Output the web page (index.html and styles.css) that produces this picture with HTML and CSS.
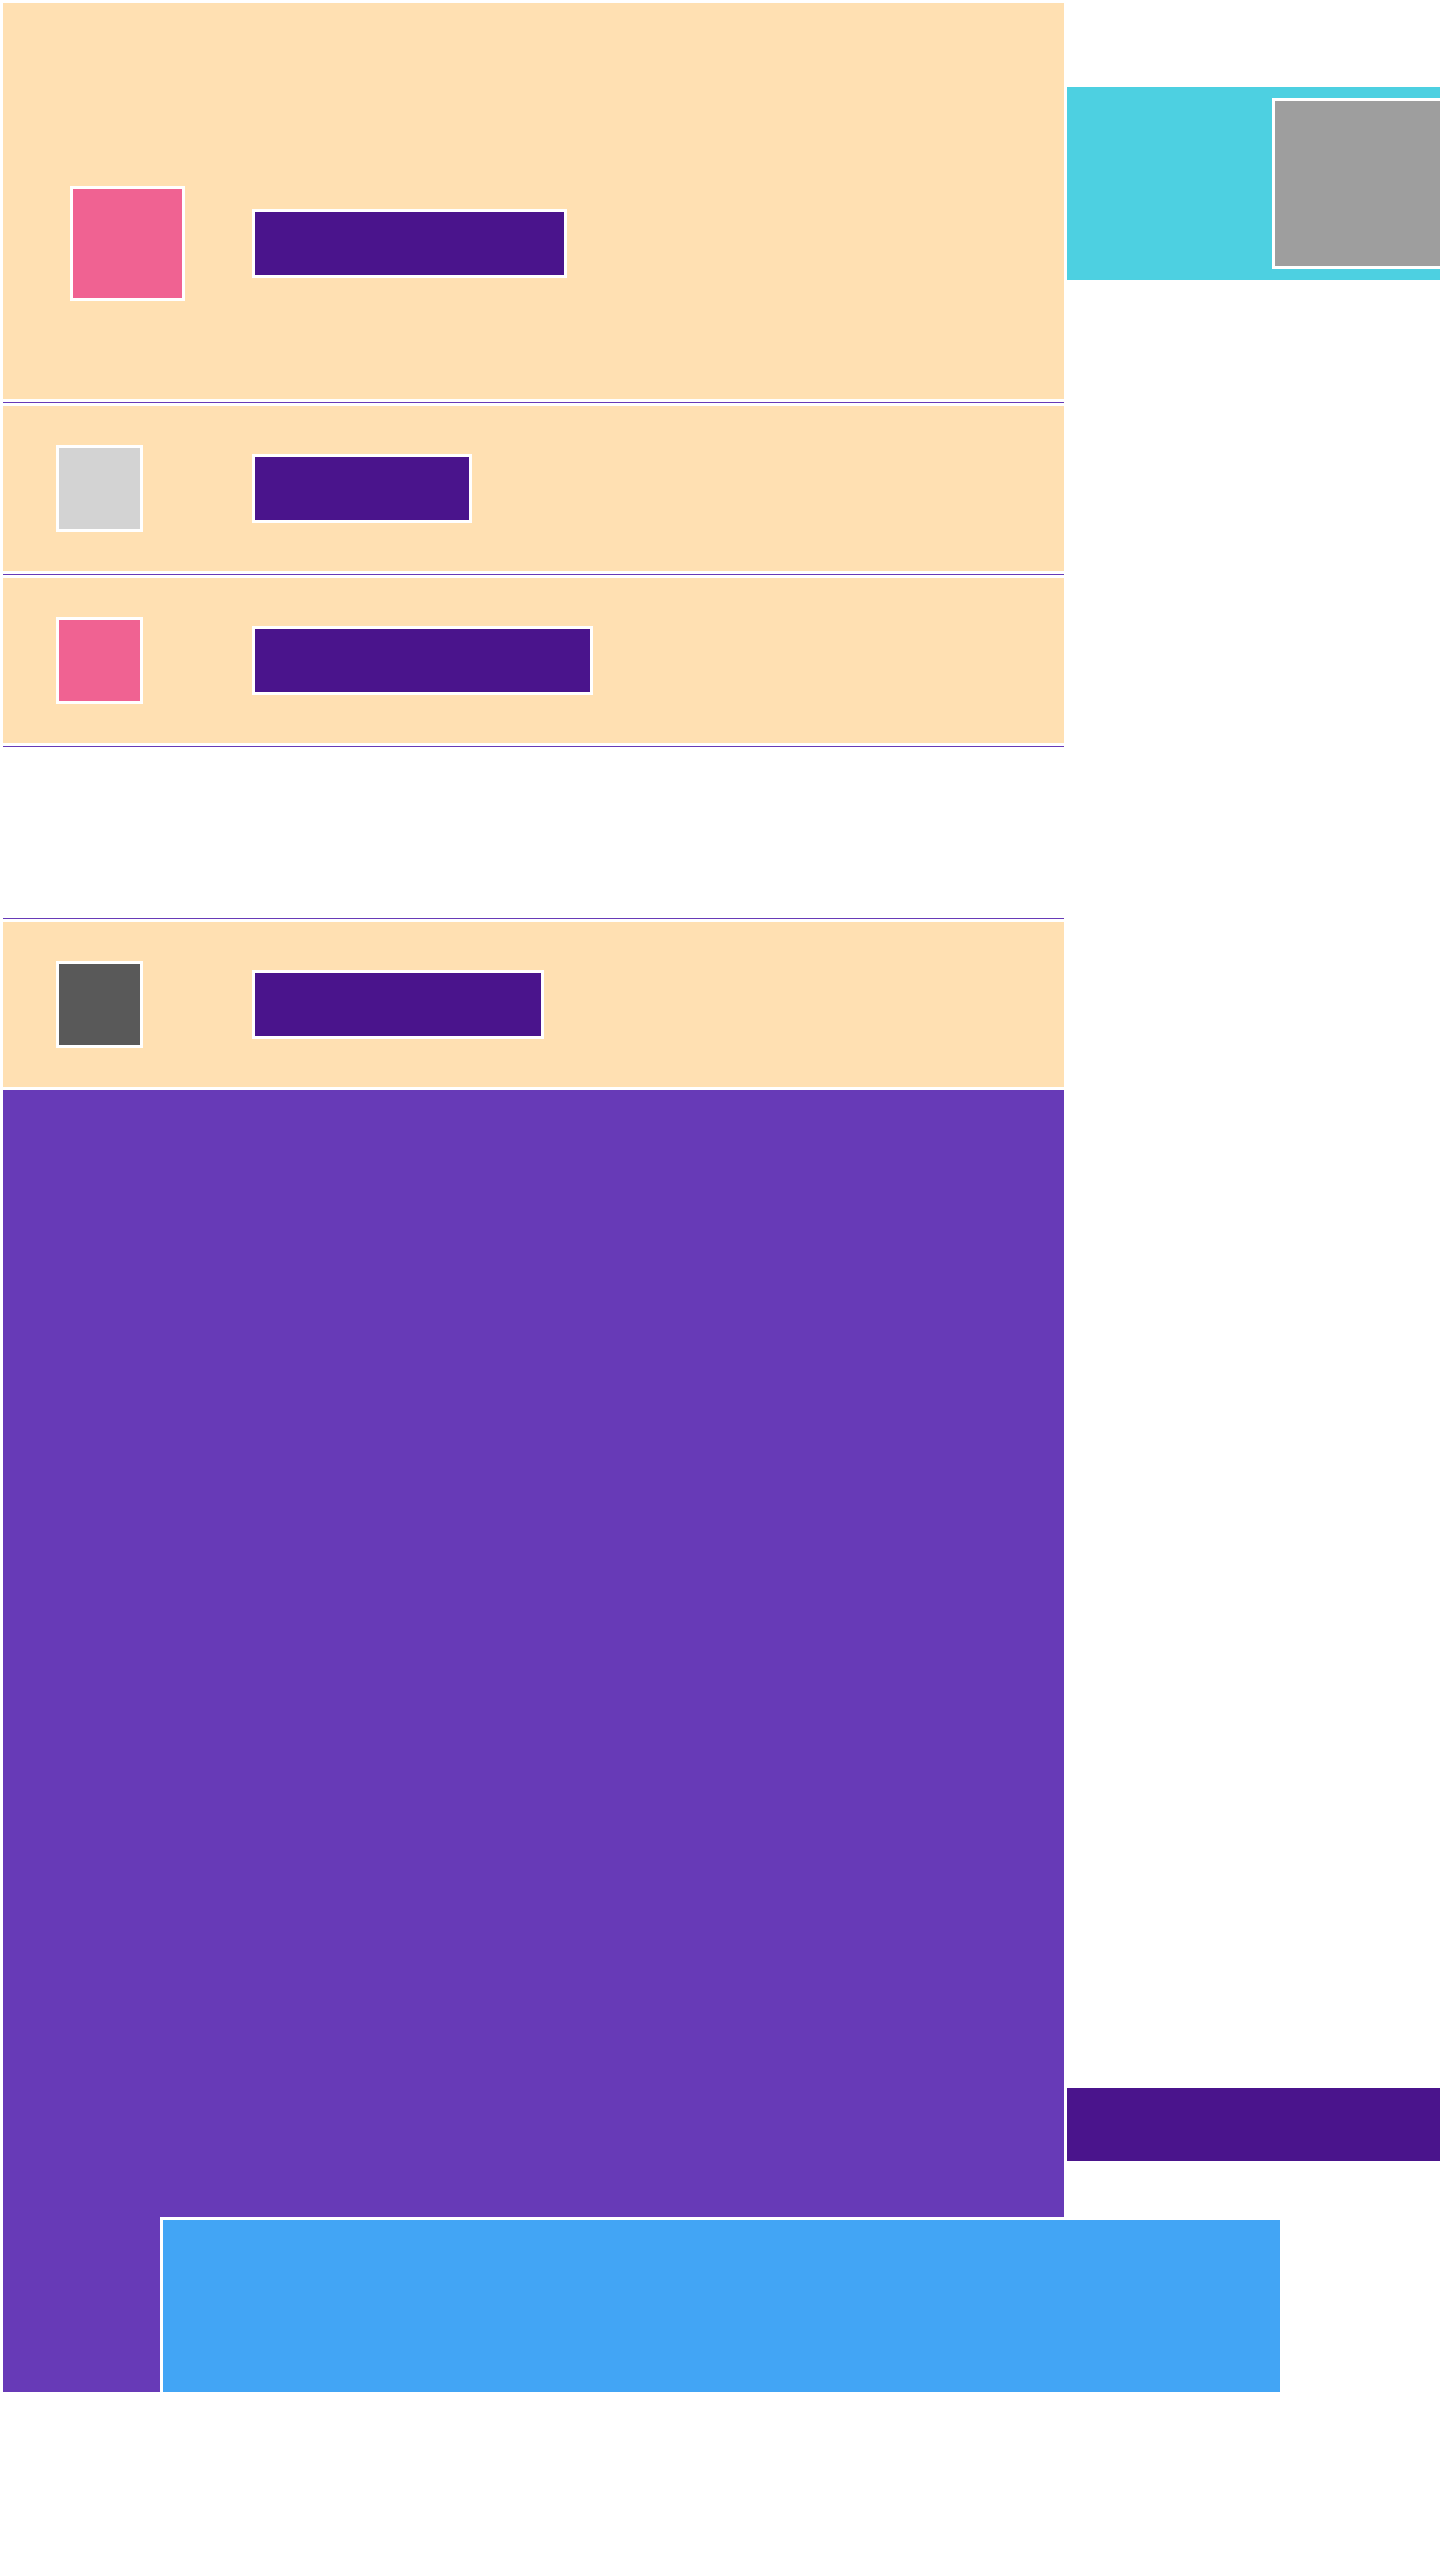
FILE: index.html
```html
<!DOCTYPE html>
<html>
<head>
    <title>Daftar</title>
    <link rel="stylesheet" href="styles.css">
</head>
<body>
    <div class="page">
        <div class="main">
            <div class="item item-top">
                <div class="thumb thumb-lg pink"></div>
                <div class="bar bar-top"></div>
            </div>
            <div class="line"></div>
            <div class="item">
                <div class="thumb light"></div>
                <div class="bar bar-a"></div>
            </div>
            <div class="line"></div>
            <div class="item">
                <div class="thumb pink"></div>
                <div class="bar bar-b"></div>
            </div>
            <div class="line"></div>
            <div class="item item-empty"></div>
            <div class="line"></div>
            <div class="item">
                <div class="thumb dark"></div>
                <div class="bar bar-c"></div>
            </div>
            <div class="panel"></div>
        </div>

        <div class="side">
            <div class="banner">
                <div class="avatar"></div>
            </div>
            <div class="side-bar"></div>
        </div>

        <!-- kartu biru menimpa panel ungu -->
        <div class="card"></div>
    </div>
</body>
</html>
```

FILE: styles.css
```css
body {
    margin: 0;
    font-family: "Liberation Sans", Arial, sans-serif;
    background-color: #fff;
    overflow-x: hidden;
}

.page {
    position: relative;
    display: flex;
    width: 1440px;
    height: 2560px;
}

.main {
    width: 1067px;
    flex-shrink: 0;
}

.item {
    display: flex;
    align-items: center;
    height: 165px;
    padding-left: 53px;
    background-color: #FFE0B2;
    border: 3px solid #fff;
}

.item-top {
    box-sizing: border-box;
    height: 402px;
    padding-left: 67px;
    padding-top: 85px;
}

.item-empty {
    background-color: #fff;
}

.line {
    height: 1px;
    margin: 0 3px;
    background-color: #673AB7;
}

.thumb {
    width: 81px;
    height: 81px;
    border: 3px solid #fff;
    margin-right: 109px;
    flex-shrink: 0;
}

.thumb-lg {
    width: 109px;
    height: 109px;
    margin-right: 67px;
}

.pink {
    background-color: #F06292;
}

.light {
    background-color: #D3D3D3;
}

.dark {
    background-color: #595959;
}

.bar {
    height: 63px;
    background-color: #4A148C;
    border: 3px solid #fff;
}

.bar-top {
    width: 309px;
}

.bar-a {
    width: 214px;
}

.bar-b {
    width: 335px;
}

.bar-c {
    width: 286px;
}

.panel {
    height: 1302px;
    margin: 0 3px;
    background-color: #673AB7;
}

.side {
    width: 373px;
    flex-shrink: 0;
}

.banner {
    display: flex;
    align-items: center;
    height: 193px;
    margin-top: 87px;
    background-color: #4DD0E1;
    overflow: hidden;
}

.avatar {
    width: 165px;
    height: 165px;
    margin-left: 205px;
    flex-shrink: 0;
    background-color: #9E9E9E;
    border: 3px solid #fff;
}

.side-bar {
    height: 73px;
    margin-top: 1808px;
    background-color: #4A148C;
}

.card {
    position: absolute;
    left: 160px;
    top: 2217px;
    width: 1117px;
    height: 172px;
    background-color: #42A5F5;
    border: 3px solid #fff;
}
```
